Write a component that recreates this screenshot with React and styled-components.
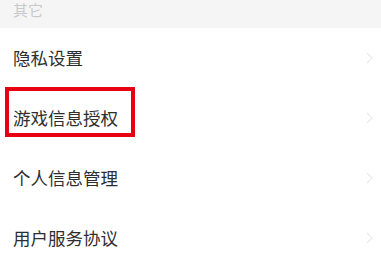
import React from 'react';
import styled, { createGlobalStyle } from 'styled-components';

const GlobalStyle = createGlobalStyle`
  html, body {
    margin: 0;
    padding: 0;
    background: #ffffff;
    font-family: "Noto Sans CJK SC", "Noto Sans", sans-serif;
  }
`;

const Page = styled.div`
  width: 381px;
  height: 254px;
  overflow: hidden;
  background: #ffffff;
`;

const SectionHeader = styled.div`
  height: 28px;
  background: #f5f5f5;
  display: flex;
  align-items: flex-start;
  padding-left: 13px;
  color: #c9c9c9;
  font-size: 15px;
  line-height: 20px;
`;

const List = styled.div`
  display: flex;
  flex-direction: column;
`;

const Row = styled.div`
  position: relative;
  height: 60px;
  display: flex;
  align-items: center;
  justify-content: space-between;
  padding: 0 8px 0 13px;
  color: #2e2e2e;
  font-size: 17.5px;
`;

const Label = styled.span`
  line-height: 1;
`;

const Highlight = styled.div`
  position: absolute;
  left: 5px;
  top: -1px;
  width: 122px;
  height: 42px;
  border: 4px solid #e60012;
`;

const Chevron = () => (
  <svg width="7" height="12" viewBox="0 0 7 12">
    <path d="M1 1l5 5-5 5" fill="none" stroke="#ebebeb" strokeWidth="1.3" />
  </svg>
);

const items = [
  { label: '隐私设置' },
  { label: '游戏信息授权', marked: true },
  { label: '个人信息管理' },
  { label: '用户服务协议' },
];

export default function App() {
  return (
    <Page>
      <GlobalStyle />
      <SectionHeader>其它</SectionHeader>
      <List>
        {items.map((item) => (
          <Row key={item.label}>
            {item.marked && <Highlight />}
            <Label>{item.label}</Label>
            <Chevron />
          </Row>
        ))}
      </List>
    </Page>
  );
}
